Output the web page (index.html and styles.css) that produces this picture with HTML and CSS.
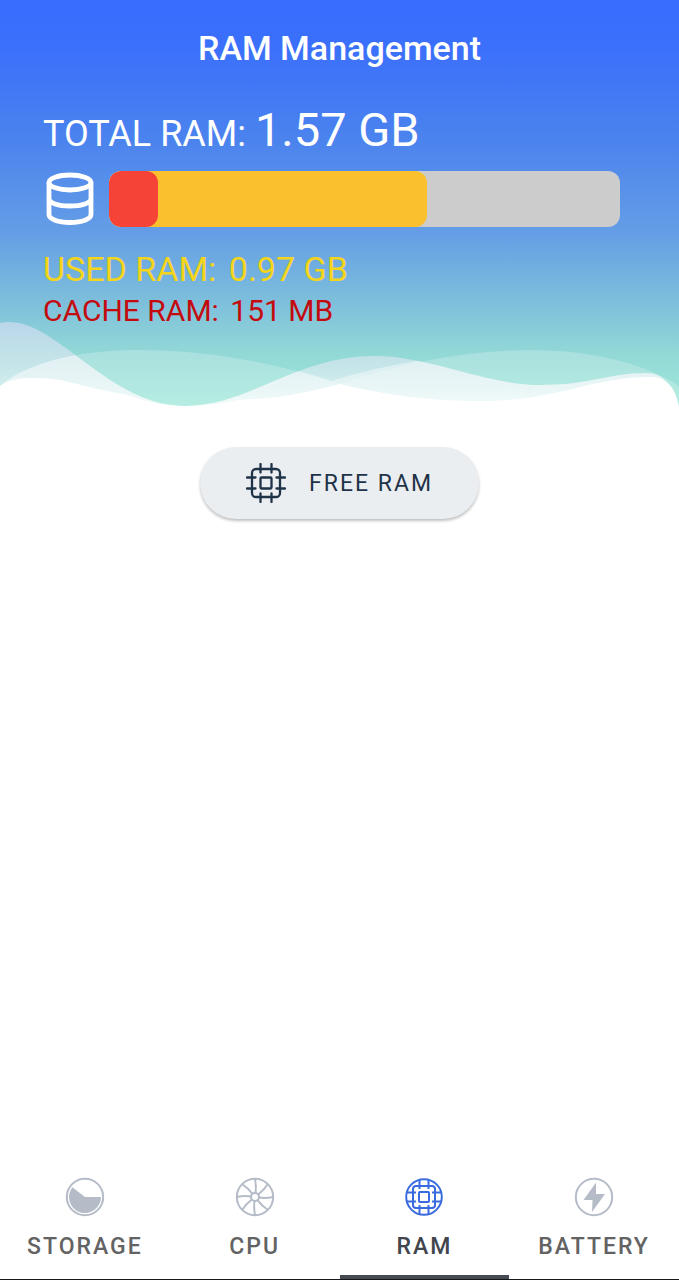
FILE: index.html
```html
<!DOCTYPE html>
<html lang="en">
<head>
    <meta charset="UTF-8">
    <meta name="viewport" content="width=device-width, initial-scale=1.0">
    <title>RAM Management</title>
    <link rel="stylesheet" href="styles.css">
</head>
<body>
    <header class="header">
        <!-- Waves along the bottom of the header -->
        <svg class="waves" viewBox="0 0 679 92" preserveAspectRatio="none" aria-hidden="true">
            <defs>
                <linearGradient id="crest" x1="0" y1="0" x2="0" y2="1">
                    <stop offset="0" stop-color="#ece4fa" stop-opacity=".5"/>
                    <stop offset=".5" stop-color="#f4eefa" stop-opacity=".5"/>
                    <stop offset="1" stop-color="#fff" stop-opacity=".7"/>
                </linearGradient>
                <clipPath id="hills">
                    <path d="M0 67C30 41 85 31 140 31C210 31 275 43 331 62C395 43 460 32 530 31C595 31 650 47 679 67V92H0Z"/>
                </clipPath>
            </defs>
            <path fill="#fff" fill-opacity=".22" d="M0 67C30 41 85 31 140 31C210 31 280 45 340 65C400 45 460 32 530 31C595 31 650 47 679 67V92H0Z"/>
            <path fill="url(#crest)" d="M0 4C52-8 105 87 185 87C250 87 295 37 375 37C430 37 485 66 540 66C590 66 610 54 645 54C665 54 672 66 679 92H0Z"/>
            <path clip-path="url(#hills)" fill="#fff" fill-opacity=".4" d="M0 4C52-8 105 87 185 87C250 87 295 37 375 37C430 37 485 66 540 66C590 66 610 54 645 54C665 54 672 66 679 92H0Z"/>
            <path fill="#fff" d="M0 67C10 60 20 59 36 59C65 59 85 69 128 76C147 83 164 87 185 87C204 87 221 85 238 81C278 80 310 73 340 65C385 76 430 82 480 82C560 82 590 58 650 58C665 58 675 66 679 88V92H0Z"/>
        </svg>

        <h1 class="title">RAM Management</h1>

        <p class="total">TOTAL RAM: <span class="total-value">1.57 GB</span></p>

        <div class="usage">
            <svg class="usage-icon" viewBox="0 0 52 56" aria-hidden="true">
                <g fill="none" stroke="#fff" stroke-width="4.8">
                    <ellipse cx="27" cy="11.500" rx="21" ry="7.500"/>
                    <path d="M6 11.500V43.500C6 48 15 51.500 27 51.500S48 48 48 43.500V11.500M6 27.500C6 32 15 35 27 35S48 32 48 27.500"/>
                </g>
            </svg>
            <div class="usage-bar">
                <div class="usage-fill used" style="width: 62.2%"></div>
                <div class="usage-fill cache" style="width: 9.6%"></div>
            </div>
        </div>

        <p class="used-text">USED RAM: <span class="value">0.97 GB</span></p>
        <p class="cache-text">CACHE RAM: <span class="value">151 MB</span></p>
    </header>

    <main class="content">
        <button class="free-btn" type="button">
            <svg class="free-icon" viewBox="0 0 40 40" aria-hidden="true">
                <g fill="none" stroke="currentColor" stroke-width="2.300" stroke-linecap="round">
                    <rect x="6" y="6" width="28" height="28" rx="4"/>
                    <rect x="14.500" y="14.500" width="11" height="11" rx="1"/>
                    <path d="M14.500 1V9.500M25.500 1V9.500M14.500 30.500V39M25.500 30.500V39M1 14.500H9.500M1 25.500H9.500M30.500 14.500H39M30.500 25.500H39"/>
                </g>
            </svg>
            FREE RAM
        </button>
    </main>

    <nav class="tabs">
        <a class="tab" href="#storage">
            <svg class="tab-icon" viewBox="0 0 40 40" aria-hidden="true">
                <circle cx="20" cy="20" r="18.200" fill="none" stroke="currentColor" stroke-width="2"/>
                <path fill="currentColor" d="M20 20H36A16 16 0 1 1 7.400 10.200Z"/>
            </svg>
            STORAGE
        </a>
        <a class="tab" href="#cpu">
            <svg class="tab-icon" viewBox="0 0 40 40" aria-hidden="true">
                <g fill="none" stroke="currentColor" stroke-width="2">
                    <circle cx="20" cy="20" r="18.200"/>
                    <circle cx="20" cy="20" r="4"/>
                    <path id="blade" d="M20.500 16Q21.500 9 20 2"/>
                    <use href="#blade" transform="rotate(45 20 20)"/>
                    <use href="#blade" transform="rotate(90 20 20)"/>
                    <use href="#blade" transform="rotate(135 20 20)"/>
                    <use href="#blade" transform="rotate(180 20 20)"/>
                    <use href="#blade" transform="rotate(225 20 20)"/>
                    <use href="#blade" transform="rotate(270 20 20)"/>
                    <use href="#blade" transform="rotate(315 20 20)"/>
                </g>
            </svg>
            CPU
        </a>
        <a class="tab active" href="#ram" aria-current="page">
            <svg class="tab-icon" viewBox="0 0 40 40" aria-hidden="true">
                <g fill="none" stroke="currentColor" stroke-width="2">
                    <circle cx="20" cy="20" r="17.800"/>
                    <rect x="9" y="9" width="22" height="22" rx="3"/>
                    <rect x="15" y="15" width="10" height="10" rx="1"/>
                    <path d="M15.500 3V12M24.500 3V12M15.500 28V37M24.500 28V37M3 15.500H12M3 24.500H12M28 15.500H37M28 24.500H37"/>
                </g>
            </svg>
            RAM
        </a>
        <a class="tab" href="#battery">
            <svg class="tab-icon" viewBox="0 0 40 40" aria-hidden="true">
                <circle cx="20" cy="20" r="18.200" fill="none" stroke="currentColor" stroke-width="2"/>
                <path fill="currentColor" d="M22 5.500L9.500 23H18.500L18 35L31 17H22Z"/>
            </svg>
            BATTERY
        </a>
    </nav>
</body>
</html>
```
FILE: styles.css
```css
* {
    box-sizing: border-box;
}

body {
    display: flex;
    flex-direction: column;
    min-height: 100vh;
    margin: 0;
    font-family: Roboto, "Liberation Sans", sans-serif;
    background: #fff;
}

.header {
    position: relative;
    padding: 28px 59px 80px 43px;
    color: #fff;
    background: linear-gradient(#386dfe 0%, #3b70fb 12%, #4b83ee 34%, #659ee5 57%, #78b8dd 70%, #92d8d6 86%, #a2eadb 100%);
}

.waves {
    position: absolute;
    left: 0;
    bottom: 0;
    width: 100%;
    height: 92px;
}

.title {
    margin: 0 -16px 38px 0;
    font-size: 34px;
    font-weight: 500;
    line-height: 40px;
    text-align: center;
}

.total {
    margin: 0 0 9px;
    font-size: 36px;
    line-height: 56px;
}

.total-value {
    font-size: 47px;
    line-height: 40px;
}

.usage {
    display: flex;
    align-items: center;
    gap: 14px;
    margin-bottom: 20px;
}

.usage-icon {
    flex: none;
    width: 52px;
    height: 56px;
}

.usage-bar {
    position: relative;
    flex: 1;
    height: 56px;
    border-radius: 12px;
    background: #ccc;
    overflow: hidden;
}

/* both fills start at the left, cache on top of used */
.usage-fill {
    position: absolute;
    top: 0;
    left: 0;
    height: 100%;
    border-radius: 12px;
}

.used {
    background: #fac02e;
}

.cache {
    background: #f54337;
}

.used-text {
    position: relative;
    margin: 0;
    font-size: 34px;
    line-height: 44px;
    color: #f5d51c;
}

.cache-text {
    position: relative;
    margin: 0;
    font-size: 30px;
    line-height: 40px;
    color: #c40a0e;
}

.value {
    margin-left: 4px;
}

.content {
    display: flex;
    flex: 1;
    justify-content: center;
    align-items: flex-start;
    padding-top: 36px;
}

.free-btn {
    display: flex;
    align-items: center;
    gap: 23px;
    height: 72px;
    padding: 0 46px;
    border: 0;
    border-radius: 36px;
    font-family: inherit;
    font-size: 23px;
    letter-spacing: 2px;
    color: #1f3348;
    background: #ebeef1;
    box-shadow: 0 2px 3px rgba(0, 0, 0, 0.25);
}

.free-icon {
    width: 40px;
    height: 40px;
}

.tabs {
    display: grid;
    grid-template-columns: repeat(4, 1fr);
    border-bottom: 1px solid #17181a;
}

.tab {
    display: flex;
    flex-direction: column;
    align-items: center;
    gap: 16px;
    padding-bottom: 14px;
    border-bottom: 4px solid transparent;
    font-size: 23px;
    font-weight: 500;
    line-height: 28px;
    letter-spacing: 2px;
    color: #636363;
    text-decoration: none;
}

.tab-icon {
    width: 40px;
    height: 40px;
    color: #b5bcc8;
}

.tab.active {
    color: #41454d;
    border-bottom-color: #464a52;
}

.tab.active .tab-icon {
    color: #3a6ae0;
}
```
